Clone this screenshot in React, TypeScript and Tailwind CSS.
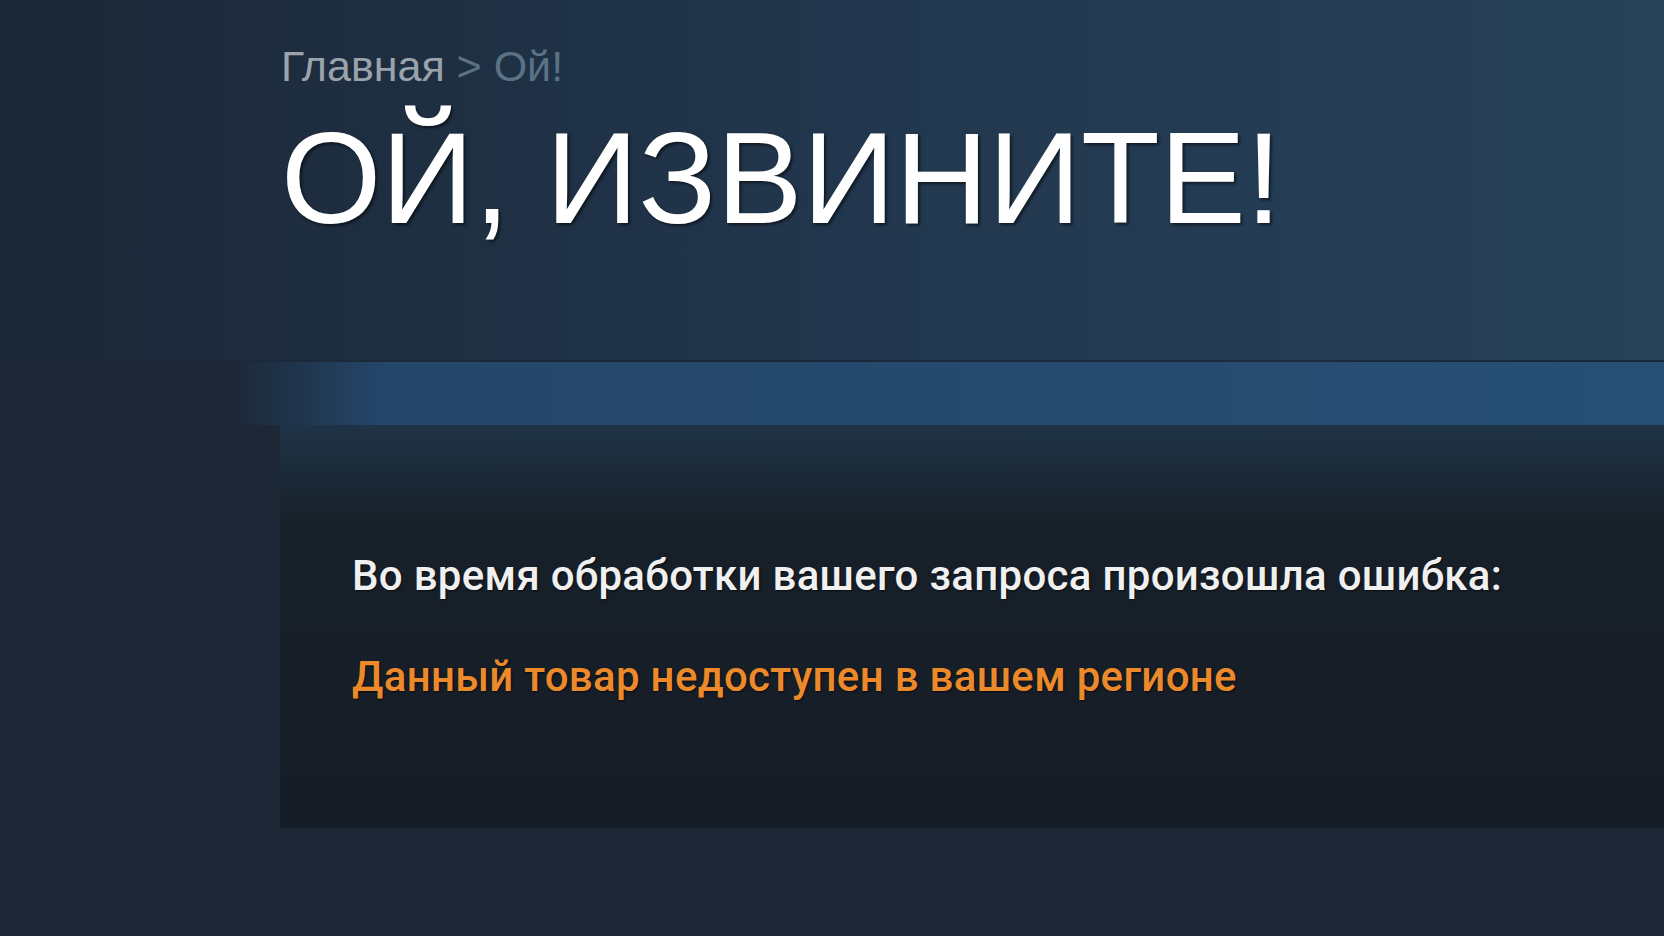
export default function App() {
  return (
    <div className="min-h-screen w-full bg-[#1d2736] font-['Liberation_Sans',Arial,sans-serif] overflow-hidden">
      {/* Header */}
      <div className="h-[360px] bg-linear-to-r from-[#1b2737] via-[#22384f] via-55% to-[#264159] pl-[281px] pt-[45px]">
        <div className="text-[43px] leading-none whitespace-nowrap">
          <span className="text-[#9aa3ab]">Главная</span>
          <span className="text-[#5b7285]"> &gt; Ой!</span>
        </div>
        <h1 className="mt-[26px] text-[129px] leading-none text-white whitespace-nowrap [text-shadow:2px_2px_3px_rgba(0,0,0,0.55)]">
          ОЙ, ИЗВИНИТЕ!
        </h1>
      </div>

      {/* Blue band */}
      <div className="h-[65px] ml-[240px] bg-linear-to-r from-[#1c2a3a] via-[#24466a] via-[10%] to-[#274f74] border-t-2 border-[#1b2a3b]" />

      {/* Error box */}
      <div className="ml-[280px] h-[403px] bg-linear-to-b from-[#1f3347] via-[#172029] via-[25%] to-[#161c27] pl-[72px] pt-[130px] font-['Roboto',Arial,sans-serif]">
        <p className="text-[42px] font-medium leading-none tracking-[0.3px] text-[#f0f0f0] whitespace-nowrap [text-shadow:1px_1px_2px_rgba(0,0,0,0.6)]">
          Во время обработки вашего запроса произошла ошибка:
        </p>
        <p className="mt-[59px] text-[42px] font-medium leading-none tracking-[0.3px] text-[#ec8a2b] whitespace-nowrap [text-shadow:1px_1px_2px_rgba(0,0,0,0.6)]">
          Данный товар недоступен в вашем регионе
        </p>
      </div>
    </div>
  )
}
